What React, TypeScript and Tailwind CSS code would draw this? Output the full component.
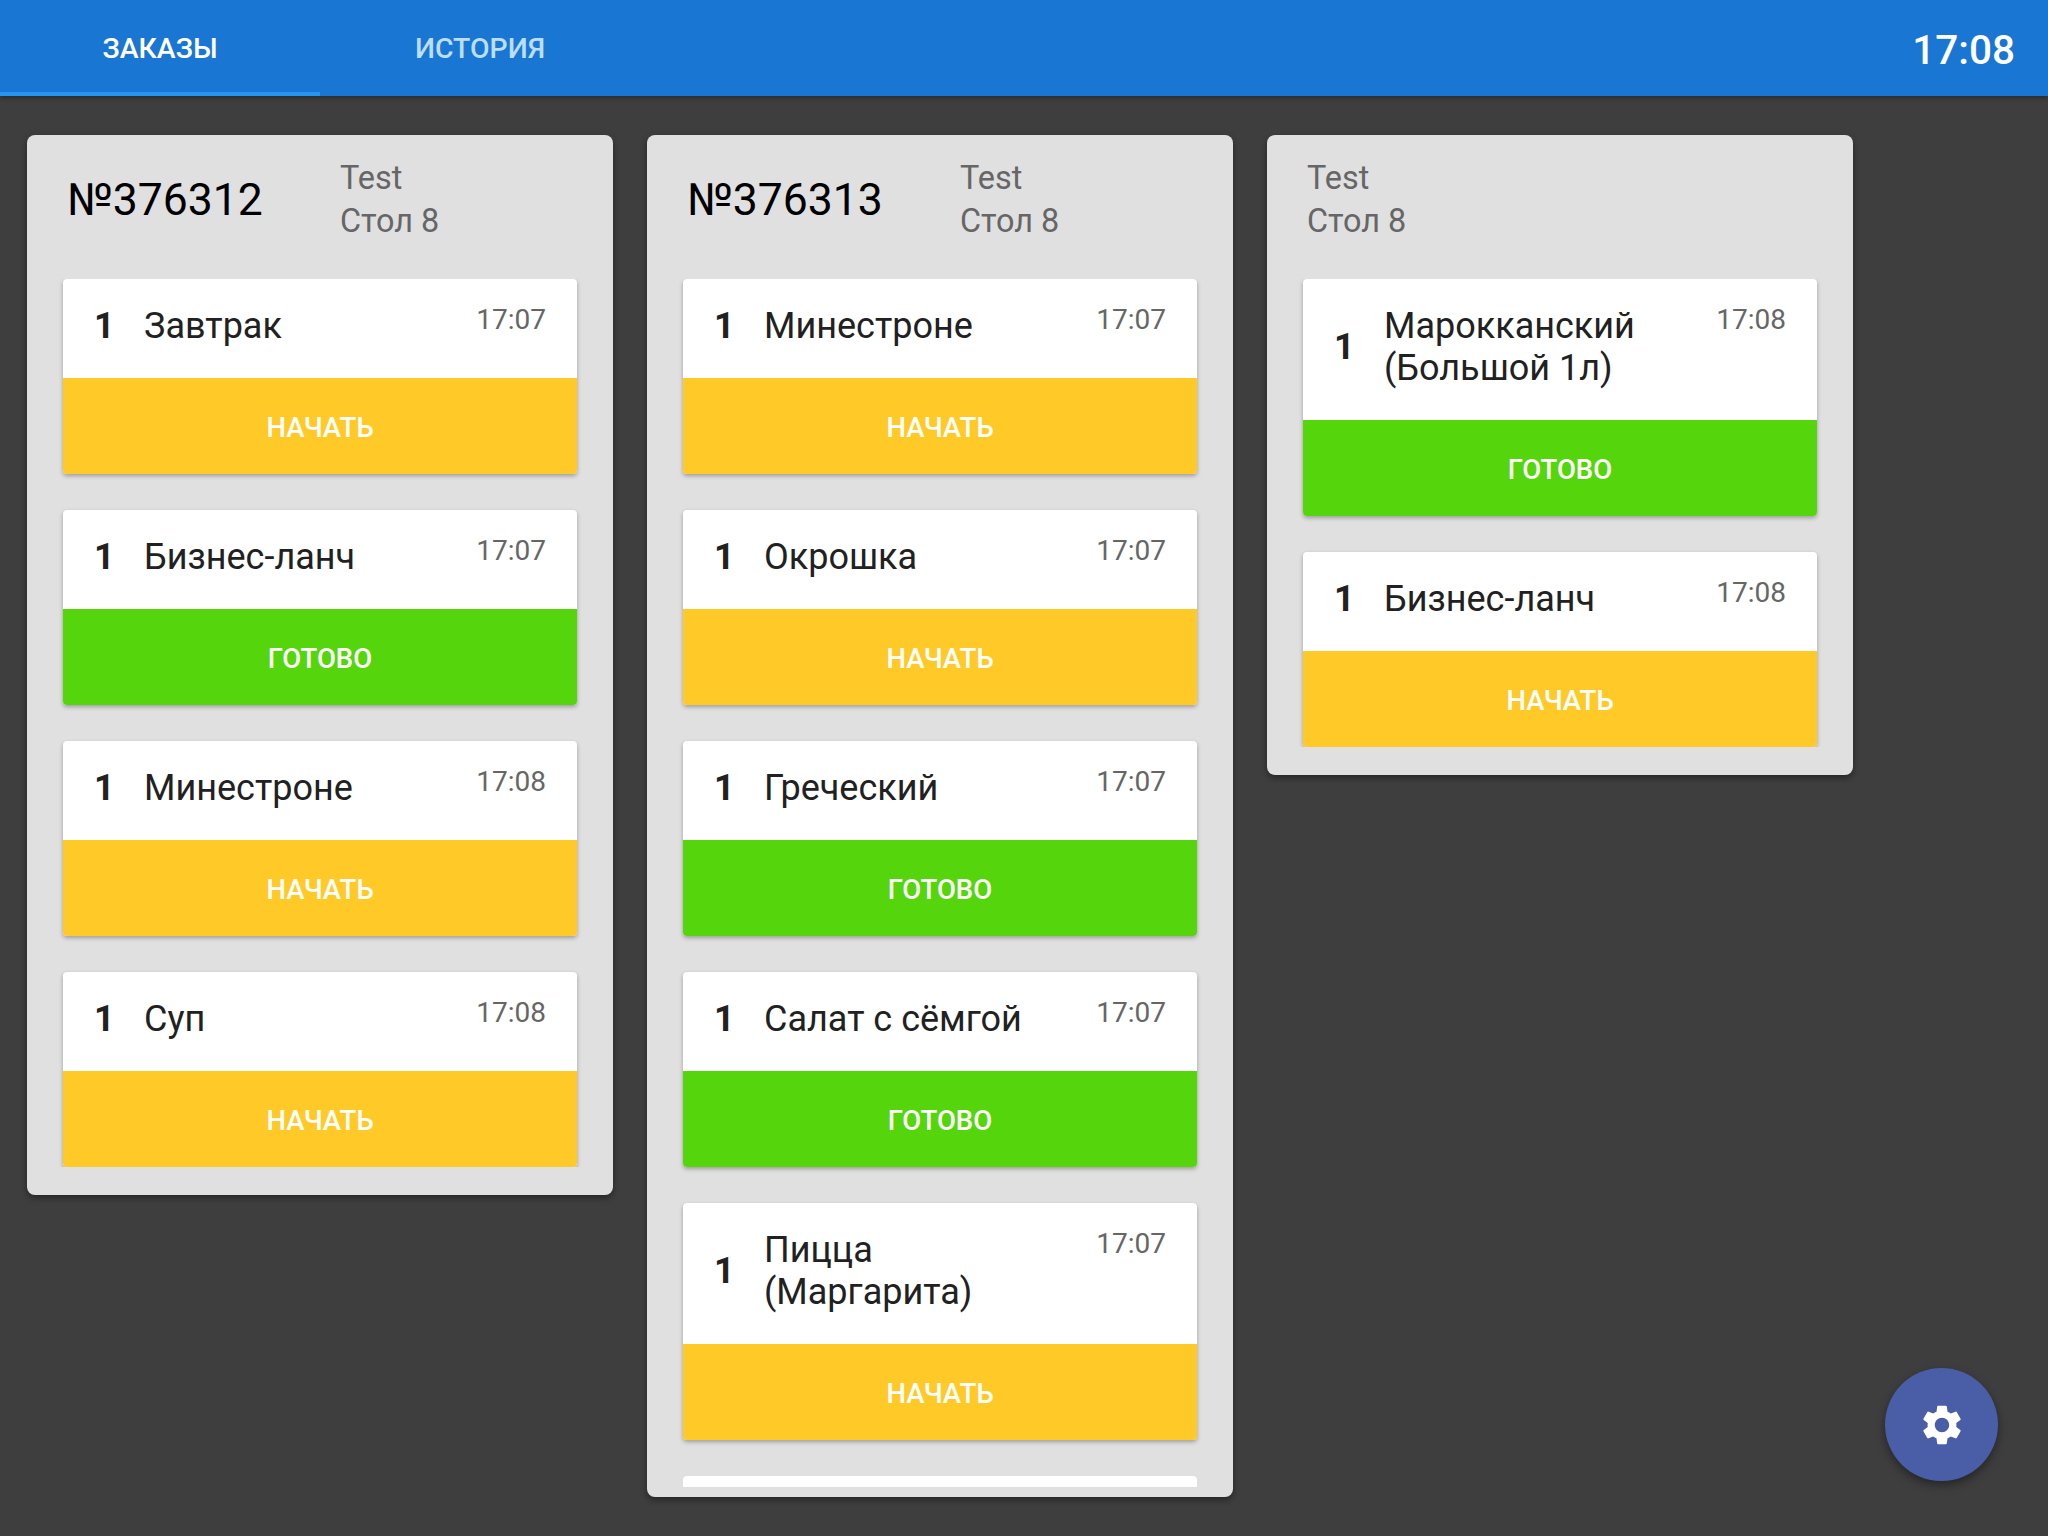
import React from "react";

type Dish = { name: string[]; time: string; done?: boolean };
type Order = { id?: string; dishes: Dish[]; clipped?: boolean };

const orders: Order[] = [
  {
    id: "№376312",
    dishes: [
      { name: ["Завтрак"], time: "17:07" },
      { name: ["Бизнес-ланч"], time: "17:07", done: true },
      { name: ["Минестроне"], time: "17:08" },
      { name: ["Суп"], time: "17:08" },
    ],
  },
  {
    id: "№376313",
    clipped: true,
    dishes: [
      { name: ["Минестроне"], time: "17:07" },
      { name: ["Окрошка"], time: "17:07" },
      { name: ["Греческий"], time: "17:07", done: true },
      { name: ["Салат с сёмгой"], time: "17:07", done: true },
      { name: ["Пицца", "(Маргарита)"], time: "17:07" },
    ],
  },
  {
    dishes: [
      { name: ["Марокканский", "(Большой 1л)"], time: "17:08", done: true },
      { name: ["Бизнес-ланч"], time: "17:08" },
    ],
  },
];

const DishCard = ({ dish }: { dish: Dish }) => (
  <div className="w-[514px] shrink-0 rounded-[4px] bg-white shadow-[0_2px_4px_rgba(0,0,0,0.3)] overflow-hidden">
    <div className="flex items-center pl-[31px] pr-[31px] pt-[26px] pb-[31px] relative">
      <span className="w-[50px] shrink-0 text-[36px] leading-[42px] font-bold text-[#212121]">1</span>
      <div className="flex-1 text-[36px] leading-[42px] text-[#212121]">
        {dish.name.map((line) => (
          <div key={line}>{line}</div>
        ))}
      </div>
      <span className="absolute right-[31px] top-[24px] text-[28px] leading-[34px] text-[#666666]">{dish.time}</span>
    </div>
    <div
      className={`h-[96px] pt-[3px] flex items-center justify-center text-[27.5px] font-medium text-white ${
        dish.done ? "bg-[#55d60c]" : "bg-[#ffca28]"
      }`}
    >
      {dish.done ? "ГОТОВО" : "НАЧАТЬ"}
    </div>
  </div>
);

const OrderCard = ({ order }: { order: Order }) => (
  <div className={`w-[586px] rounded-[8px] bg-[#e0e0e0] shadow-[0_3px_6px_rgba(0,0,0,0.4)] flex flex-col ${order.clipped ? "h-[1362px] pb-[10px]" : "pb-[28px]"}`}>
    <div className="h-[144px] shrink-0 flex items-start pl-[40px] pt-[22px]">
      {order.id && <div className="w-[273px] shrink-0 pt-[17px] text-[44.5px] leading-[53px] text-black">{order.id}</div>}
      <div className="text-[32.4px] leading-[43px] text-[#666666]">
        <div>Test</div>
        <div>Стол 8</div>
      </div>
    </div>
    <div className="flex-1 min-h-0 overflow-hidden flex flex-col items-center gap-[36px]">
      {order.dishes.map((dish, i) => (
        <DishCard key={i} dish={dish} />
      ))}
      {order.clipped && <div className="w-[514px] h-[99px] shrink-0 rounded-[4px] bg-white" />}
    </div>
  </div>
);

export default function App() {
  return (
    <div className="relative h-[1536px] w-[2048px] overflow-hidden bg-[#3e3e3e] font-['Roboto',sans-serif]">
      <div className="h-[96px] bg-[#1976d2] shadow-[0_2px_4px_rgba(0,0,0,0.3)] flex items-stretch justify-between pr-[33px]">
        <div className="flex">
          <div className="w-[320px] pt-[3px] flex items-center justify-center shadow-[inset_0_-4px_0_#2196f3] text-[28.4px] font-medium text-white">
            ЗАКАЗЫ
          </div>
          <div className="w-[320px] pt-[3px] flex items-center justify-center text-[28.4px] font-medium text-[#bbdefb]">
            ИСТОРИЯ
          </div>
        </div>
        <div className="flex items-center pt-[4px] text-[40.5px] font-medium text-white">17:08</div>
      </div>

      <div className="flex items-start gap-[34px] pl-[27px] pt-[39px]">
        {orders.map((order, i) => (
          <OrderCard key={i} order={order} />
        ))}
      </div>

      <button className="absolute left-[1885px] top-[1368px] w-[113px] h-[113px] rounded-full bg-[#4a5ea8] shadow-[0_4px_10px_rgba(0,0,0,0.4)] flex items-center justify-center">
        <svg viewBox="0 0 24 24" className="w-[48px] h-[48px] fill-white">
          <path d="M19.14 12.94c.04-.3.06-.61.06-.94 0-.32-.02-.64-.07-.94l2.03-1.58c.18-.14.23-.41.12-.61l-1.92-3.32c-.12-.22-.37-.29-.59-.22l-2.39.96c-.5-.38-1.03-.7-1.62-.94l-.36-2.54c-.04-.24-.24-.41-.48-.41h-3.84c-.24 0-.43.17-.47.41l-.36 2.54c-.59.24-1.13.57-1.62.94l-2.39-.96c-.22-.08-.47 0-.59.22L2.74 8.87c-.12.21-.08.47.12.61l2.03 1.58c-.05.3-.09.63-.09.94s.02.64.07.94l-2.03 1.58c-.18.14-.23.41-.12.61l1.92 3.32c.12.22.37.29.59.22l2.39-.96c.5.38 1.03.7 1.62.94l.36 2.54c.05.24.24.41.48.41h3.84c.24 0 .44-.17.47-.41l.36-2.54c.59-.24 1.13-.56 1.62-.94l2.39.96c.22.08.47 0 .59-.22l1.92-3.32c.12-.22.07-.47-.12-.61l-2.01-1.58zM12 15.6c-1.98 0-3.6-1.62-3.6-3.6s1.62-3.6 3.6-3.6 3.6 1.62 3.6 3.6-1.62 3.6-3.6 3.6z" />
        </svg>
      </button>
    </div>
  );
}
